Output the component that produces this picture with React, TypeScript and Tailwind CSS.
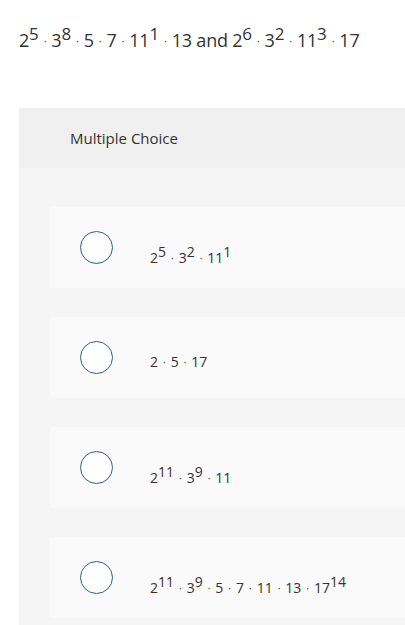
import React from 'react';

type Term = { b: string; e?: string };

const Expr = ({ terms, sup, dot }: { terms: Term[]; sup: string; dot: string }) => (
  <span>
    {terms.map((t, i) => (
      <React.Fragment key={i}>
        {i > 0 && <span className={dot}>·</span>}
        {t.b}
        {t.e && <span className={sup}>{t.e}</span>}
      </React.Fragment>
    ))}
  </span>
);

const options: Term[][] = [
  [{ b: '2', e: '5' }, { b: '3', e: '2' }, { b: '11', e: '1' }],
  [{ b: '2' }, { b: '5' }, { b: '17' }],
  [{ b: '2', e: '11' }, { b: '3', e: '9' }, { b: '11' }],
  [{ b: '2', e: '11' }, { b: '3', e: '9' }, { b: '5' }, { b: '7' }, { b: '11' }, { b: '13' }, { b: '17', e: '14' }],
];

export default function App() {
  return (
    <div className="w-[405px] h-[625px] bg-white overflow-hidden text-[#333]" style={{ fontFamily: '"Open Sans", sans-serif' }}>
      <div className="h-[108px] pl-[19px] pt-[22px]">
        <p className="text-[18px] leading-[24px] tracking-[-0.2px] whitespace-nowrap">
          <Expr terms={[{ b: '2', e: '5' }, { b: '3', e: '8' }, { b: '5' }, { b: '7' }, { b: '11', e: '1' }, { b: '13' }]} sup="text-[17px] align-[7px]" dot="mx-[5px] text-[11px] align-[2px]" />
          {' and '}
          <Expr terms={[{ b: '2', e: '6' }, { b: '3', e: '2' }, { b: '11', e: '3' }, { b: '17' }]} sup="text-[17px] align-[7px]" dot="mx-[5px] text-[11px] align-[2px]" />
        </p>
      </div>

      <div className="ml-[19px] bg-[#f5f5f5]">
        <div className="h-[60px] bg-[#f0f0f0] flex items-center pl-[51px] text-[15px] text-[#333]">
          Multiple Choice
        </div>
        <div className="pl-[31px] pt-[39px] flex flex-col gap-[29px] pb-[10px]">
          {options.map((o, i) => (
            <div key={i} className="h-[81px] bg-[#fafafa] rounded-l-[3px] flex items-center pl-[30px]">
              <span className="w-[33px] h-[33px] rounded-full border-[1.5px] border-[#2b5d8e] bg-white shrink-0" />
              <span className="ml-[37px] mt-[8px] h-[24px] leading-[24px] text-[14px] whitespace-nowrap">
                <Expr terms={o} sup="text-[14px] align-[6px]" dot="mx-[5px] text-[10px] align-[1px]" />
              </span>
            </div>
          ))}
        </div>
      </div>
    </div>
  );
}
